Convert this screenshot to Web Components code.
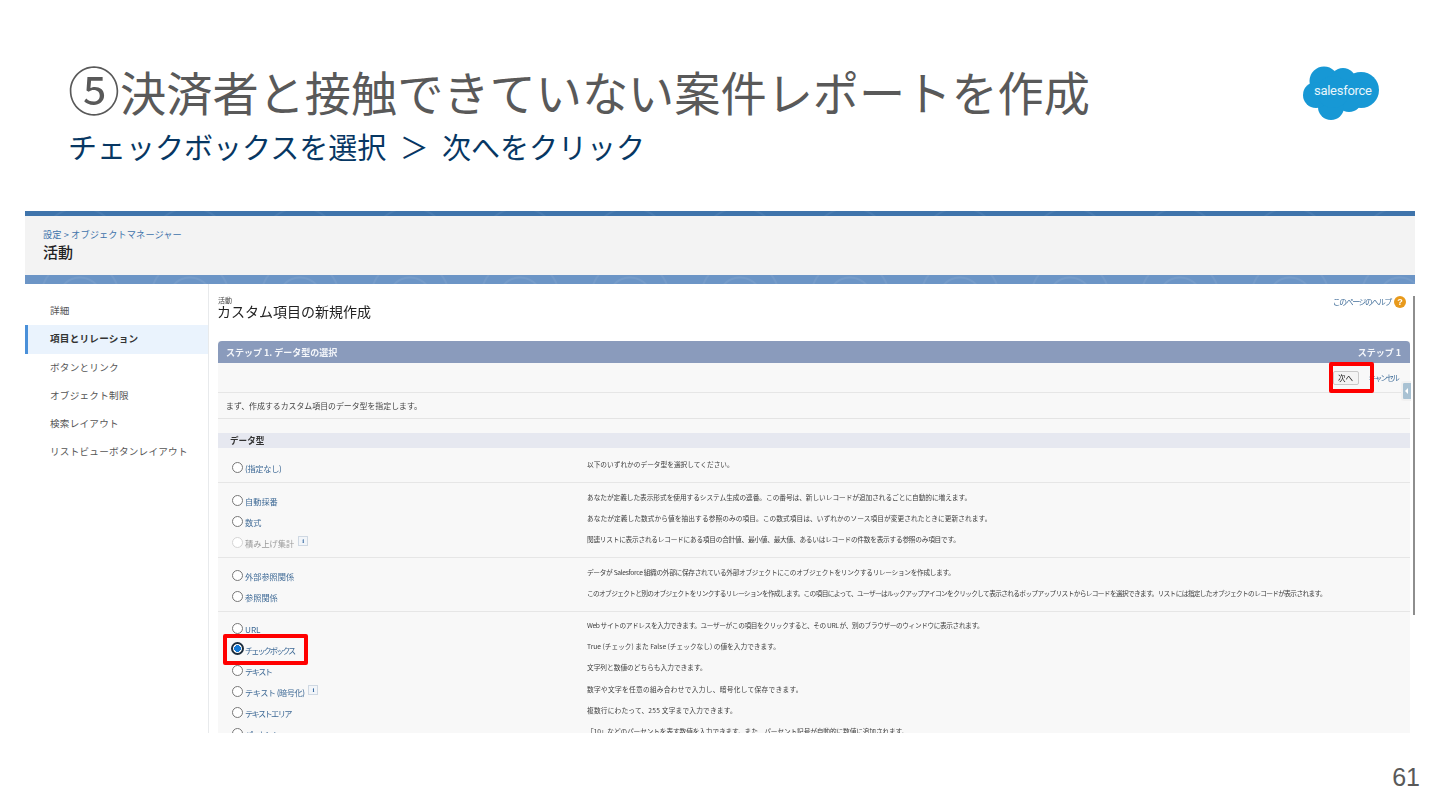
<!DOCTYPE html>
<html lang="ja"><head><meta charset="utf-8"><style>
html,body{margin:0;padding:0;background:#fff}
body{font-family:"Noto Sans CJK JP","Noto Sans",sans-serif}
</style></head><body>
<sf-slide>
  <sf-heading slot="head">
    <span slot="title"><span style="font-size:52px;line-height:54px">⑤</span>決済者と接触できていない案件レポートを作成</span>
    <span slot="sub">チェックボックスを選択 ＞ 次へをクリック</span>
  </sf-heading>
  <sf-logo slot="logo"></sf-logo>
  <sf-setup slot="shot">
    <sf-nav slot="nav">
      <sf-nav-item>詳細</sf-nav-item>
      <sf-nav-item active>項目とリレーション</sf-nav-item>
      <sf-nav-item>ボタンとリンク</sf-nav-item>
      <sf-nav-item>オブジェクト制限</sf-nav-item>
      <sf-nav-item>検索レイアウト</sf-nav-item>
      <sf-nav-item>リストビューボタンレイアウト</sf-nav-item>
    </sf-nav>
    <sf-wizard slot="main">
      <sf-group h="35" pt="8">
        <sf-type label="(指定なし)" lls="-.3">以下のいずれかのデータ型を選択してください。</sf-type>
      </sf-group>
      <sf-group h="75" pt="6">
        <sf-type label="自動採番" dls="-.05">あなたが定義した表示形式を使用するシステム生成の連番。この番号は、新しいレコードが追加されるごとに自動的に増えます。</sf-type>
        <sf-type label="数式" dls=".07">あなたが定義した数式から値を抽出する参照のみの項目。この数式項目は、いずれかのソース項目が変更されたときに更新されます。</sf-type>
        <sf-type label="積み上げ集計" disabled info dls="-.25">関連リストに表示されるレコードにある項目の合計値、最小値、最大値、あるいはレコードの件数を表示する参照のみ項目です。</sf-type>
      </sf-group>
      <sf-group h="54" pt="6">
        <sf-type label="外部参照関係" dls="-.32">データが Salesforce 組織の外部に保存されている外部オブジェクトにこのオブジェクトをリンクするリレーションを作成します。</sf-type>
        <sf-type label="参照関係" dls="-.65">このオブジェクトと別のオブジェクトをリンクするリレーションを作成します。この項目によって、ユーザーはルックアップアイコンをクリックして表示されるポップアップリストからレコードを選択できます。リストには指定したオブジェクトのレコードが表示されます。</sf-type>
      </sf-group>
      <sf-group h="130" pt="5" last>
        <sf-type label="URL" dls="-.4">Web サイトのアドレスを入力できます。ユーザーがこの項目をクリックすると、その URL が、別のブラウザーのウィンドウに表示されます。</sf-type>
        <sf-type label="チェックボックス" checked lls="-2">True (チェック) また False (チェックなし) の値を入力できます。</sf-type>
        <sf-type label="テキスト" lls="-1.5">文字列と数値のどちらも入力できます。</sf-type>
        <sf-type label="テキスト (暗号化)" info lls="-.5" dls=".3">数字や文字を任意の組み合わせで入力し、暗号化して保存できます。</sf-type>
        <sf-type label="テキストエリア" lls="-1.6" dls=".2">複数行にわたって、255 文字まで入力できます。</sf-type>
        <sf-type label="パーセント" lls="-1.5" dls="-.12">「10」などのパーセントを表す数値を入力できます。また、パーセント記号が自動的に数値に追加されます。</sf-type>
      </sf-group>
    </sf-wizard>
  </sf-setup>
  <span slot="page">61</span>
</sf-slide>
<script>
function def(name, html, init){
  const t=document.createElement('template');t.innerHTML=html;
  customElements.define(name,class extends HTMLElement{
    constructor(){super();this.attachShadow({mode:'open'}).appendChild(t.content.cloneNode(true));}
    connectedCallback(){if(init)init(this,this.shadowRoot);}
  });
}
const band='radial-gradient(circle at 50% 120%,transparent 20px,rgba(255,255,255,.07) 21px,rgba(255,255,255,.07) 22px,transparent 23px,transparent 38px,rgba(255,255,255,.06) 39px,rgba(255,255,255,.06) 40px,transparent 41px)';
def('sf-slide',`<style>
:host{display:flex;flex-direction:column;width:1440px;height:810px;overflow:hidden;background:#fff;box-sizing:border-box}
.top{display:flex;justify-content:space-between;height:211px;box-sizing:border-box;padding:62px 60px 0 68px}
.shot{height:522px;margin:0 25px;overflow:hidden;position:relative;flex:none}
.foot{flex:1;display:flex;justify-content:flex-end;align-items:flex-end;padding:0 20px 18px 0;font:25px/30px "Liberation Sans",sans-serif;color:#595959}
</style><div class="top"><slot name="head"></slot><slot name="logo"></slot></div>
<div class="shot"><slot name="shot"></slot></div><div class="foot"><slot name="page"></slot></div>`);
def('sf-heading',`<style>
:host{display:block;font-family:"Noto Sans CJK JP",sans-serif}
.t{font-size:46.2px;line-height:54px;height:54px;color:#595959;white-space:nowrap}
.s{font-size:29px;line-height:36px;color:#073763;white-space:nowrap;margin-top:12px;word-spacing:7px}
</style><div class="t"><slot name="title"></slot></div><div class="s"><slot name="sub"></slot></div>`);
def('sf-logo',`<style>:host{display:block;width:77px;height:54px;margin-top:4px}svg{display:block}
text{font:400 13px Roboto,"Liberation Sans",sans-serif;fill:#e8f6fc}</style>
<svg width="77" height="54" viewBox="0 0 77 54"><g fill="#1798d5">
<circle cx="21" cy="15" r="14.5"/><circle cx="40" cy="15" r="13"/><circle cx="58" cy="24" r="18"/><circle cx="46" cy="33" r="13"/><circle cx="28" cy="41" r="13"/><circle cx="13" cy="29" r="13"/><circle cx="30" cy="26" r="16"/></g>
<text x="40" y="29" text-anchor="middle" textLength="58">salesforce</text></svg>`);
def('sf-setup',`<style>
:host{display:flex;flex-direction:column;height:522px;background:#fff;font-family:"Noto Sans CJK JP",sans-serif;filter:blur(.35px)}
.b1{height:5px;background:${band} 0 0/110px 30px,#3f74ab}
.hd{height:59px;background:#f3f3f3;box-sizing:border-box;padding:12px 0 0 18px}
.bc{font-size:9.2px;letter-spacing:.1px;line-height:12px;color:#3f74ab;white-space:nowrap}
.h{font-size:15px;font-weight:500;line-height:20px;color:#222;margin-top:2px}
.b2{height:9px;background:${band} 0 0/110px 20px,#6c95c6}
.body{flex:1;display:flex;min-height:0}
</style><div class="b1"></div><div class="hd"><div class="bc">設定 &gt; オブジェクトマネージャー</div><div class="h">活動</div></div><div class="b2"></div>
<div class="body"><slot name="nav"></slot><slot name="main"></slot></div>`);
def('sf-nav',`<style>:host{display:block;width:184px;flex:none;box-sizing:border-box;padding-top:13px;border-right:1px solid #e8eaec}
</style><slot></slot>`);
def('sf-nav-item',`<style>:host{display:block;height:28.3px;line-height:27px;padding-left:25px;font-size:9.6px;letter-spacing:.25px;color:#555;white-space:nowrap;box-sizing:border-box}
:host([active]){background:#eaf3fd;border-left:3px solid #4a90d9;padding-left:22px;font-weight:700;color:#333}</style><slot></slot>`);
def('sf-wizard',`<style>
:host{display:block;flex:1;position:relative;min-width:0;font-family:"Noto Sans CJK JP",sans-serif}
.wrap{padding:12px 5px 0 9px;box-sizing:border-box}
.small{font-size:7px;line-height:8px;color:#444}
.h1{font-size:14px;line-height:15px;color:#222;white-space:nowrap;margin-left:-1px}
.help{position:absolute;right:9px;top:12px;font-size:7.8px;letter-spacing:-1.3px;line-height:12px;color:#45719c;display:flex;align-items:center;gap:3px;white-space:nowrap}
.q{width:12px;height:12px;border-radius:50%;background:#e89a1c;color:#fff;font:700 9px/12px "Liberation Sans",sans-serif;letter-spacing:0;text-align:center}
.panel{margin-top:22px;background:#f8f8f8}
.ph{height:22px;background:#8a9bbc;border-radius:4px 4px 0 0;display:flex;justify-content:space-between;align-items:center;padding:0 9px 0 8px;color:#f4f6fa;font-size:9px;font-weight:700;white-space:nowrap}
.btns{height:30px;border-bottom:1px solid #e6e6e6;box-sizing:border-box;display:flex;justify-content:flex-end;align-items:center;padding:0 12px 0 0;position:relative}
.btn{width:26px;height:14px;box-sizing:border-box;border:1px solid #c9c9c9;border-radius:2px;background:#f4f4f4;font-size:7.5px;line-height:12px;text-align:center;color:#222;margin:0 10px 0 0}
.cancel{font-size:7.8px;color:#45719c;white-space:nowrap;letter-spacing:-1.9px}
.intro{height:26px;border-bottom:1px solid #e4e4e4;box-sizing:border-box;font-size:7.9px;line-height:26px;color:#444;padding-left:8px;white-space:nowrap}
.sec{margin-top:14px;height:15px;background:#e6e8f0;font-size:8.6px;font-weight:700;line-height:15px;padding-left:12px;color:#333}
.tab{position:absolute;right:4px;top:97px;width:10px;height:20px;background:#a9c2d3;border:2px solid #f1f1f1;border-right:0;box-sizing:border-box;border-radius:3px 0 0 3px}
.tab::after{content:"";position:absolute;left:2px;top:5px;border:3px solid transparent;border-right:3px solid #fff;border-left:0}
.bar{position:absolute;right:0;top:12px;width:2px;height:319px;background:#8e8e8e}
</style><div class="wrap"><div class="small">活動</div><div class="h1">カスタム項目の新規作成</div>
<div class="help">このページのヘルプ<span class="q">?</span></div>
<div class="panel"><div class="ph"><span>ステップ 1. データ型の選択</span><span>ステップ 1</span></div>
<div class="btns"><div class="btn">次へ</div><span class="cancel">キャンセル</span></div>
<div class="intro">まず、作成するカスタム項目のデータ型を指定します。</div>
<div class="sec">データ型</div><slot></slot></div></div>
<div class="tab"></div><div class="bar"></div><sf-mark style="right:41px;top:78px;width:45px;height:31px"></sf-mark>`);
def('sf-mark',`<style>:host{display:block;position:absolute;box-sizing:border-box;border:4.5px solid #f00;border-radius:2px}</style>`);
def('sf-group',`<style>:host{display:block;box-sizing:border-box;border-bottom:1px solid #e6e6e6;background:#f8f8f8}
:host([last]){border-bottom:0}</style><slot></slot>`,(el)=>{
  el.style.height=el.getAttribute('h')+'px';el.style.paddingTop=el.getAttribute('pt')+'px';});
def('sf-type',`<style>
:host{display:grid;grid-template-columns:369px 1fr;height:21.2px;align-items:start;white-space:nowrap;position:relative}
.l{display:flex;align-items:center;padding-left:14px;height:21px}
.r{width:11px;height:11px;box-sizing:border-box;border:1px solid #777;border-radius:50%;background:#fff;margin-right:2px;margin-top:1px;flex:none}
.n{font-size:8.2px;color:#3f6a96;margin-top:2px}
.i{margin-left:4px;width:10px;height:10px;box-sizing:border-box;border:1px solid #cfd8e2;background:#f2f5f9;color:#3d6fa5;font:700 7px/8px "Liberation Serif",serif;text-align:center;margin-top:-2px}
.d{font-size:6.7px;line-height:21px;color:#3c3c3c;margin-top:-2px}
:host([disabled]) .r{border-color:#d4d4d4}
:host([disabled]) .n{color:#999}
:host([checked]) .r{border:2px solid #1c2c3c;background:radial-gradient(circle,#1478d4 0 3.2px,#fff 3.6px);width:13px;height:13px;margin-left:-1px;margin-right:1px;margin-top:-1px}
</style><div class="l"><span class="r"></span><span class="n"></span></div><div class="d"><slot></slot></div>`,(el,s)=>{
  const n=s.querySelector('.n');n.textContent=el.getAttribute('label');
  if(el.hasAttribute('lls'))n.style.letterSpacing=el.getAttribute('lls')+'px';
  if(el.hasAttribute('dls'))s.querySelector('.d').style.letterSpacing=el.getAttribute('dls')+'px';
  if(el.hasAttribute('info')&&!s.querySelector('.i')){const i=document.createElement('span');i.className='i';i.textContent='i';s.querySelector('.l').appendChild(i);}
  if(el.hasAttribute('checked')&&!s.querySelector('sf-mark')){const m=document.createElement('sf-mark');m.style.cssText='left:5px;top:-4px;width:85px;height:31px';s.appendChild(m);}
});
</script>
</body></html>
